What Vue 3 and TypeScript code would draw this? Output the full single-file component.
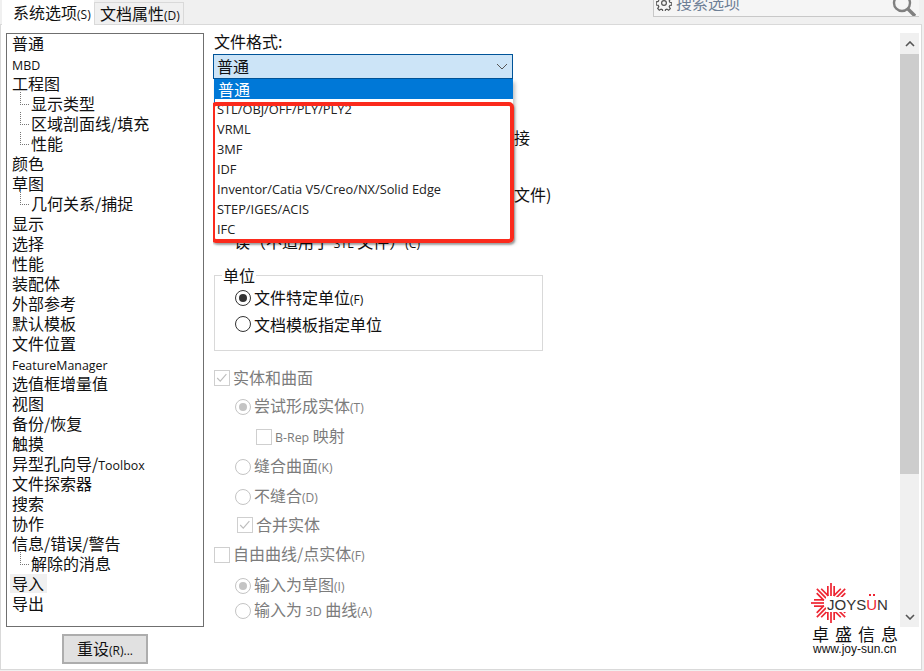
<script setup lang="ts">
interface TreeItem { label: string; child?: boolean; selected?: boolean }
const tree: TreeItem[] = [
  { label: '普通' }, { label: 'MBD' }, { label: '工程图' },
  { label: '显示类型', child: true }, { label: '区域剖面线/填充', child: true }, { label: '性能', child: true },
  { label: '颜色' }, { label: '草图' }, { label: '几何关系/捕捉', child: true },
  { label: '显示' }, { label: '选择' }, { label: '性能' }, { label: '装配体' }, { label: '外部参考' },
  { label: '默认模板' }, { label: '文件位置' }, { label: 'FeatureManager' }, { label: '选值框增量值' },
  { label: '视图' }, { label: '备份/恢复' }, { label: '触摸' }, { label: '异型孔向导/Toolbox' }, { label: '文件探索器' },
  { label: '搜索' }, { label: '协作' }, { label: '信息/错误/警告' }, { label: '解除的消息', child: true },
  { label: '导入', selected: true }, { label: '导出' },
]
const formats = ['STL/OBJ/OFF/PLY/PLY2', 'VRML', '3MF', 'IDF', 'Inventor/Catia V5/Creo/NX/Solid Edge', 'STEP/IGES/ACIS', 'IFC']

interface Opt { kind: 'check' | 'radio'; on: boolean; text: string; key?: string; indent: number; gap: number }
const options: Opt[] = [
  { kind: 'check', on: true, text: '实体和曲面', indent: 0, gap: 17 },
  { kind: 'radio', on: true, text: '尝试形成实体', key: '(T)', indent: 21, gap: 9 },
  { kind: 'check', on: false, text: 'B-Rep 映射', indent: 42, gap: 10 },
  { kind: 'radio', on: false, text: '缝合曲面', key: '(K)', indent: 21, gap: 10 },
  { kind: 'radio', on: false, text: '不缝合', key: '(D)', indent: 21, gap: 10 },
  { kind: 'check', on: true, text: '合并实体', indent: 23, gap: 8 },
  { kind: 'check', on: false, text: '自由曲线/点实体', key: '(F)', indent: 0, gap: 10 },
  { kind: 'radio', on: true, text: '输入为草图', key: '(I)', indent: 21, gap: 11 },
  { kind: 'radio', on: false, text: '输入为 3D 曲线', key: '(A)', indent: 21, gap: 5 },
]
const clusters = [0, 45, 90, 135, 180, 225, 270, 315]

// Latin runs are set in the smaller UI face, as the dialog's font link does.
function runs(s: string): { t: string; lat: boolean }[] {
  return s
    .split(/([A-Za-z0-9][A-Za-z0-9-]*)/)
    .filter(Boolean)
    .map((t) => ({ t, lat: /^[A-Za-z0-9]/.test(t) }))
}
</script>

<template>
  <div class="page">
    <header class="tabbar">
      <div class="tab active">系统选项<small>(S)</small></div>
      <div class="tab">文档属性<small>(D)</small></div>
      <div class="search">
        <svg class="gear" viewBox="0 0 16 16" width="16" height="16" fill="none" stroke="#555" stroke-width="1.2">
          <circle cx="8" cy="8" r="2.4" />
          <path d="M6.8 1h2.4l.4 2 1.3.6 1.8-1.1 1.6 1.7-1.1 1.7.6 1.4 2 .4v2.4l-2 .4-.6 1.3 1.1 1.8-1.7 1.6-1.7-1.1-1.4.6-.4 2H6.8l-.4-2-1.3-.6-1.8 1.1-1.6-1.7 1.1-1.7-.6-1.4-2-.4V6.8l2-.4.6-1.3-1.1-1.8 1.7-1.6 1.7 1.1 1.4-.6z" />
        </svg>
        <span class="search-text">搜索选项</span>
        <svg class="lens" viewBox="0 0 24 24" width="24" height="24" fill="none" stroke="#808080">
          <circle cx="10" cy="9" r="8" stroke-width="2.4" />
          <path d="M16 15l7 7" stroke-width="3.4" />
        </svg>
      </div>
    </header>

    <main class="panel">
      <aside class="left">
        <ul class="tree">
          <li v-for="item in tree" :key="item.label + item.child" class="node" :class="{ child: item.child }">
            <span :class="{ selected: item.selected }"><template v-for="(r, i) in runs(item.label)" :key="i"><span v-if="r.lat" class="lat">{{ r.t }}</span><template v-else>{{ r.t }}</template></template></span>
          </li>
        </ul>
        <button class="reset">重设<small>(R)...</small></button>
      </aside>

      <section class="right">
        <div class="options">
          <div class="format-label">文件格式:</div>
          <div class="combo">
            <span class="combo-text">普通</span>
            <svg viewBox="0 0 12 7" width="12" height="7" fill="none" stroke="#555" stroke-width="1"><path d="M1 1l5 5 5-5" /></svg>
          </div>

          <div class="hidden-row tail r1">接</div>
          <div class="hidden-row tail r2">文件)</div>
          <div class="hidden-row r3">误（不适用于 <span class="lat">STL</span> 文件）<small>(C)</small></div>

          <div class="unit-group">
            <span class="legend">单位</span>
            <label class="unit-row"><i class="radio on dark"></i><span>文件特定单位<small>(F)</small></span></label>
            <label class="unit-row"><i class="radio dark"></i><span>文档模板指定单位</span></label>
          </div>

          <div
            v-for="o in options"
            :key="o.text"
            class="opt"
            :style="{ marginTop: o.gap + 'px', paddingLeft: o.indent + 'px' }"
          >
            <i v-if="o.kind === 'radio'" class="radio" :class="{ on: o.on }"></i>
            <i v-else class="check">
              <svg v-if="o.on" viewBox="0 0 16 16" width="14" height="14" fill="none" stroke="#bdbdbd" stroke-width="1.3"><path d="M2.5 8l3.5 3.5 7-8" /></svg>
            </i>
            <span class="opt-text"><template v-for="(r, i) in runs(o.text)" :key="i"><span v-if="r.lat" class="lat">{{ r.t }}</span><template v-else>{{ r.t }}</template></template><small v-if="o.key">{{ o.key }}</small></span>
          </div>

          <div class="popup">
            <div class="popup-current">普通</div>
            <div v-for="f in formats" :key="f" class="popup-item">{{ f }}</div>
            <div class="annotation"></div>
          </div>
        </div>

        <div class="scrollbar">
          <div class="sb-btn">
            <svg viewBox="0 0 10 6" width="10" height="6" fill="none" stroke="#555" stroke-width="1.6"><path d="M1 5l4-4 4 4" /></svg>
          </div>
          <div class="sb-thumb"></div>
          <div class="sb-track"></div>
          <div class="sb-btn">
            <svg viewBox="0 0 10 6" width="10" height="6" fill="none" stroke="#555" stroke-width="1.6"><path d="M1 1l4 4 4-4" /></svg>
          </div>
        </div>

        <div class="logo">
          <svg class="burst" viewBox="-20 -20 40 40" width="40" height="40">
            <g v-for="a in clusters" :key="a" :transform="`rotate(${a})`" fill="#ee2532">
              <rect x="-4" y="-17" width="1.7" height="10" />
              <rect x="-0.85" y="-20" width="1.7" height="13" />
              <rect x="2.3" y="-17" width="1.7" height="10" />
            </g>
          </svg>
          <div class="brand">JOYS<span class="u">U</span>N</div>
          <div class="cn">卓盛信息</div>
          <div class="url">www.joy-sun.cn</div>
        </div>
      </section>
    </main>
  </div>
</template>

<style>
html, body { margin: 0; background: #f0f0f0; }
</style>

<style scoped>
.page {
  width: 924px;
  height: 671px;
  overflow: hidden;
  background: #f0f0f0;
  color: #111;
  font: 16px/20px "Noto Sans CJK SC", "Open Sans", sans-serif;
}
small { font-family: "Open Sans", "Noto Sans", sans-serif; font-size: 12px; }
.lat { font-family: "Open Sans", "Noto Sans", sans-serif; font-size: 12.4px; }

.tabbar { display: flex; height: 24px; padding-left: 2px; }
.tab {
  box-sizing: border-box;
  width: 90px;
  height: 22px;
  margin-top: 2px;
  padding-left: 5px;
  border: 1px solid #d9d9d9;
  border-bottom: 0;
  line-height: 21px;
}
.tab.active {
  position: relative;
  z-index: 1;
  width: 92px;
  height: 25px;
  margin-top: 0;
  padding-left: 10px;
  background: #fff;
  border-color: #fff;
  line-height: 22px;
}
.search {
  display: flex;
  align-items: flex-end;
  box-sizing: border-box;
  width: 266px;
  height: 17px;
  margin-left: auto;
  margin-right: 5px;
  padding-left: 2px;
  overflow: hidden;
  background: #f5f5f5;
  border-left: 1px solid #c8c8c8;
  border-bottom: 1px solid #c8c8c8;
}
.gear { flex: none; margin-bottom: 5px; }
.search-text { margin-left: 4px; margin-bottom: 4px; color: #6d7f96; line-height: 20px; }
.lens { flex: none; margin-left: auto; margin-right: 3px; margin-bottom: -2px; }

.panel {
  display: flex;
  box-sizing: border-box;
  width: 922px;
  height: 646px;
  background: #fff;
  border: 1px solid #d9d9d9;
}
.left { display: flex; flex-direction: column; align-items: flex-start; width: 203px; padding: 8px 0 0 5px; flex: none; box-sizing: border-box; }
.tree {
  box-sizing: border-box;
  width: 198px;
  height: 594px;
  margin: 0;
  padding: 0;
  list-style: none;
  border: 1px solid #6f6f6f;
}
.node { position: relative; height: 20px; padding-left: 5px; line-height: 19px; white-space: nowrap; }
.node.child { padding-left: 24px; }
.node.child::before {
  content: "";
  position: absolute;
  left: 13px;
  top: -2px;
  width: 8px;
  height: 12px;
  border-left: 1px dotted #777;
  border-bottom: 1px dotted #777;
}
.selected { display: inline-block; margin-left: -2px; padding: 0 3px 0 2px; background: #f0f0f0; }
.reset {
  box-sizing: border-box;
  width: 86px;
  height: 30px;
  margin: 7px 0 0 56px;
  padding: 0;
  background: #e1e1e1;
  border: 2px solid #adadad;
  color: #111;
  font: inherit;
}

.right { position: relative; display: flex; flex: 1; padding: 8px 2px 0 9px; }
.options { position: relative; flex: 1; height: 594px; overflow: hidden; }
.format-label { height: 18px; line-height: 16px; padding-left: 1px; }
.combo {
  display: flex;
  align-items: center;
  justify-content: space-between;
  box-sizing: border-box;
  width: 300px;
  height: 25px;
  margin-top: 3px;
  padding: 0 4px 0 3px;
  background: #cce4f7;
  border: 1px solid #005499;
}
.combo-text { margin-bottom: 2px; }
.hidden-row { height: 20px; padding-left: 21px; white-space: nowrap; }
.tail { padding-left: 301px; }
.r1 { margin-top: 48px; }
.r2 { margin-top: 37px; }
.r3 { margin-top: 27px; }

.unit-group {
  position: relative;
  box-sizing: border-box;
  width: 329px;
  height: 76px;
  margin: 24px 0 0 1px;
  padding: 12px 0 0 20px;
  border: 1px solid #d9d9d9;
}
.legend { position: absolute; left: 7px; top: -11px; padding: 0 1px; background: #fff; line-height: 20px; }
.unit-row { display: flex; align-items: center; gap: 3px; height: 20px; margin-bottom: 6px; line-height: 19px; }

.opt { display: flex; align-items: center; gap: 3px; height: 20px; margin-left: 1px; line-height: 19px; color: #7c7c7c; white-space: nowrap; }
.opt-text { margin-bottom: 2px; }
.radio {
  position: relative;
  flex: none;
  box-sizing: border-box;
  width: 16px;
  height: 16px;
  border: 1px solid #c4c4c4;
  border-radius: 50%;
}
.radio.dark { border-color: #333; }
.radio.on::after {
  content: "";
  position: absolute;
  inset: 3px;
  border-radius: 50%;
  background: #c4c4c4;
}
.radio.dark.on::after { background: #333; }
.check {
  display: flex;
  align-items: center;
  justify-content: center;
  flex: none;
  box-sizing: border-box;
  width: 16px;
  height: 16px;
  border: 1px solid #cfcfcf;
}

.popup {
  position: absolute;
  left: 1px;
  top: 46px;
  box-sizing: border-box;
  width: 299px;
  height: 161px;
  background: #fff;
  border-left: 1px solid #0078d7;
  box-shadow: 2px 3px 4px rgba(0, 0, 0, 0.25);
}
.popup-current { height: 20px; padding-left: 3px; background: #0078d7; color: #fff; }
.popup-item { height: 20px; padding-left: 2px; line-height: 21px; font-family: "Open Sans", "Noto Sans", sans-serif; font-size: 12.8px; color: #222; white-space: nowrap; }
.annotation {
  position: absolute;
  left: -4px;
  top: 23px;
  width: 295px;
  height: 133px;
  border: 4px solid #fb2a1c;
  border-radius: 5px;
  box-shadow: 1px 2px 2px rgba(0, 0, 0, 0.3);
}

.scrollbar { display: flex; flex-direction: column; flex: none; width: 19px; height: 594px; background: #f0f0f0; }
.sb-btn { display: flex; align-items: center; justify-content: center; height: 21px; flex: none; }
.sb-thumb { height: 420px; background: #cdcdcd; flex: none; }
.sb-track { flex: 1; }

.logo { position: absolute; left: 607px; top: 558px; width: 88px; height: 74px; color: #111; }
.burst { position: absolute; left: 0; top: 0; }
.brand {
  position: absolute;
  left: 15px;
  top: 14px;
  padding-left: 1px;
  background: #fff;
  font: 15px/15px "Liberation Sans", sans-serif;
  color: #333;
}
.u { position: relative; color: #ee2532; }
.u::before {
  content: "";
  position: absolute;
  left: 3px;
  top: -2px;
  width: 1.5px;
  height: 2px;
  background: #ee2532;
  box-shadow: 4px 0 0 #ee2532;
}
.cn { position: absolute; left: 1px; top: 41px; font-size: 17px; line-height: 20px; letter-spacing: 6px; white-space: nowrap; }
.url { position: absolute; left: 2px; top: 59px; font: 12px/15px "Liberation Sans", sans-serif; white-space: nowrap; }
</style>
